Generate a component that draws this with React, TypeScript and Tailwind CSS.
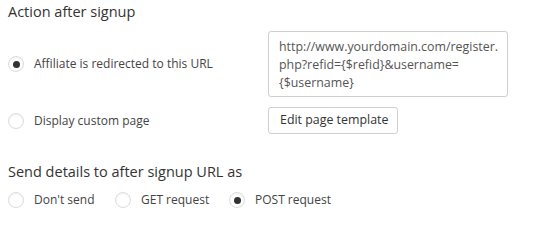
import React from "react";

function Radio({ checked }: { checked?: boolean }) {
  return (
    <span className="flex h-4 w-4 shrink-0 items-center justify-center rounded-full border border-[#dcdcdc] bg-white shadow-[inset_0_1px_2px_rgba(0,0,0,0.06)]">
      {checked && <span className="h-[7px] w-[7px] rounded-full bg-[#333]" />}
    </span>
  );
}

export default function App() {
  return (
    <div
      className="h-[230px] w-[553px] bg-white pl-2 pt-[2px] text-[12px] text-[#444]"
      style={{ fontFamily: '"Open Sans", "Liberation Sans", sans-serif' }}
    >
      <h2 className="text-[14.5px] leading-5 text-[#333]">Action after signup</h2>

      <div className="mt-[9px] flex items-center">
        <div className="flex w-[260px] items-center gap-[10px]">
          <Radio checked />
          <span className="leading-5">Affiliate is redirected to this URL</span>
        </div>
        <div className="h-[66px] w-[240px] rounded-[3px] border border-[#cfcfcf] pl-[10px] pt-[6px] text-[12.4px] leading-[18px] text-[#555]">
          http://www.yourdomain.com/register.
          <br />
          php?refid={"{$refid}"}&amp;username=
          <br />
          {"{$username}"}
        </div>
      </div>

      <div className="mt-[10px] flex items-center">
        <div className="flex w-[260px] items-center gap-[10px]">
          <Radio />
          <span className="leading-5">Display custom page</span>
        </div>
        <button className="h-[27px] w-[130px] rounded-[3px] border border-[#cfcfcf] bg-white pl-[11px] text-left text-[12.4px] text-[#333]">
          Edit page template
        </button>
      </div>

      <h2 className="mt-7 text-[14.5px] leading-5 text-[#333]">Send details to after signup URL as</h2>

      <div className="mt-2 flex items-center">
        <div className="flex w-[107px] items-center gap-[10px]">
          <Radio />
          <span className="leading-5">Don't send</span>
        </div>
        <div className="flex w-[114px] items-center gap-[10px]">
          <Radio />
          <span className="leading-5">GET request</span>
        </div>
        <div className="flex items-center gap-[10px]">
          <Radio checked />
          <span className="leading-5">POST request</span>
        </div>
      </div>
    </div>
  );
}
